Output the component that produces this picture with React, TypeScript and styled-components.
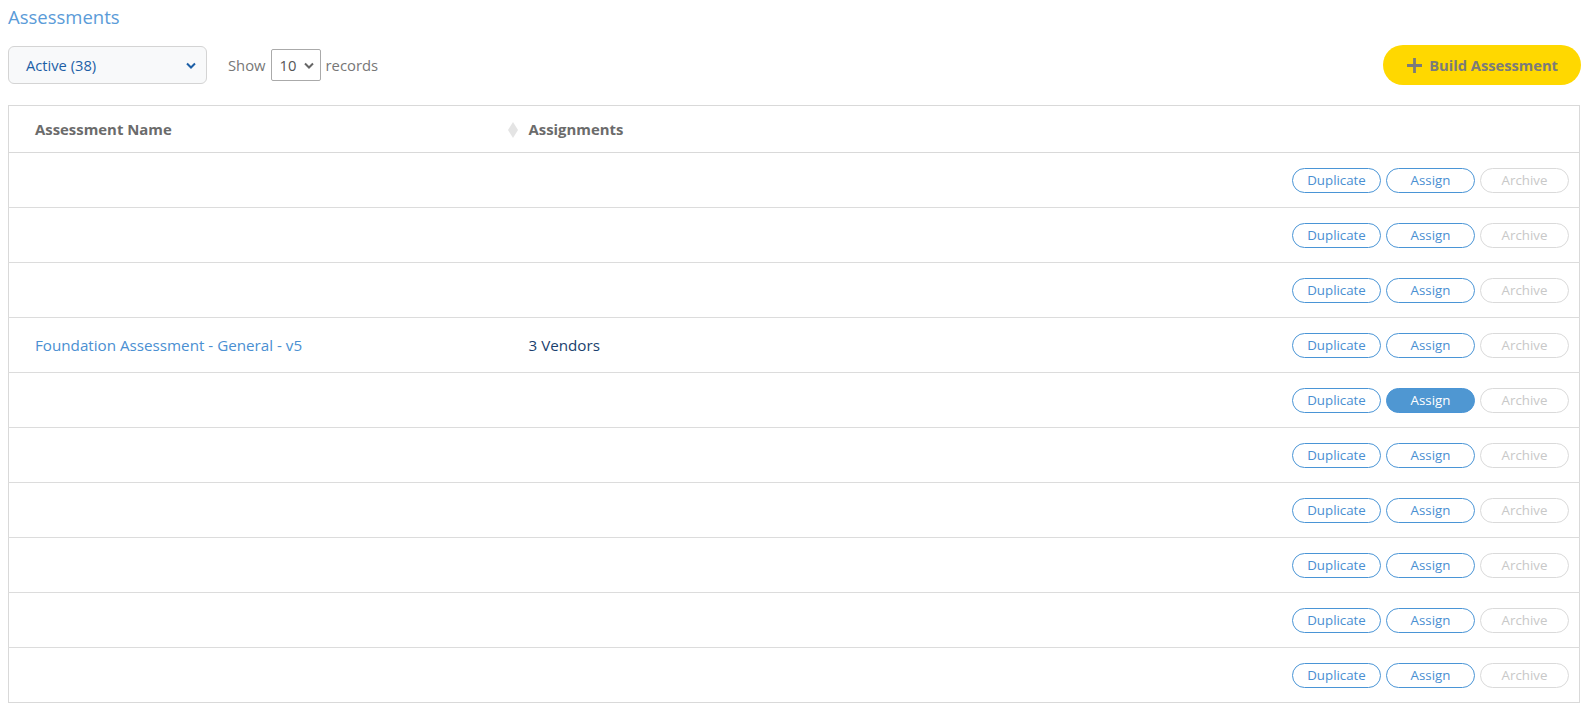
import React, { useState } from 'react'
import styled, { createGlobalStyle } from 'styled-components'

const GlobalStyle = createGlobalStyle`
  html, body {
    overflow: hidden;
  }
  body {
    margin: 0;
    background: #fff;
    font-family: 'Open Sans', 'Noto Sans', sans-serif;
    color: #333;
  }
`

const Page = styled.div`
  padding: 4px 6px 0 8px;
`

const Title = styled.h2`
  margin: 0 0 16px;
  font-size: 18.5px;
  font-weight: 400;
  line-height: 26px;
  color: #5a9bd8;
`

const Toolbar = styled.div`
  display: flex;
  align-items: center;
  height: 38px;
  margin-bottom: 21px;
`

const StatusSelect = styled.div`
  display: flex;
  align-items: center;
  justify-content: space-between;
  box-sizing: border-box;
  width: 199px;
  height: 38px;
  padding: 0 10px 0 17px;
  border: 1px solid #d4d4d4;
  border-radius: 6px;
  background: #f8f9fa;
  color: #1d5fa6;
  font-size: 14.7px;
`

const LengthLabel = styled.div`
  display: flex;
  align-items: center;
  gap: 5px;
  margin-left: 21px;
  color: #777;
  font-size: 14.8px;
`

const LengthSelect = styled.div`
  display: flex;
  align-items: center;
  justify-content: space-between;
  box-sizing: border-box;
  width: 50px;
  height: 32px;
  padding: 0 6px 0 8px;
  border: 1px solid #aaa;
  border-radius: 2px;
  color: #555;
  font-size: 14.8px;
`

const BuildButton = styled.button`
  display: flex;
  align-items: center;
  gap: 6px;
  margin-left: auto;
  margin-right: -1px;
  height: 40px;
  padding: 0 23px 0 23px;
  border: none;
  border-radius: 20px;
  background: #ffd800;
  color: #7b7b7b;
  font-family: inherit;
  font-size: 14.7px;
  font-weight: 700;
  cursor: pointer;
`

const Table = styled.table`
  width: 100%;
  border-collapse: collapse;
  border: 1px solid #d9d9d9;
  font-size: 15.2px;
`

const HeadCell = styled.th<{ $width?: number }>`
  position: relative;
  box-sizing: border-box;
  width: ${({ $width }) => ($width ? `${$width}px` : 'auto')};
  height: 47px;
  padding: 0 26px;
  text-align: left;
  font-size: 14.9px;
  font-weight: 700;
  color: #6b6b6b;
  border-bottom: 1px solid #d9d9d9;
`

const SortIcon = styled.svg`
  position: absolute;
  left: 5px;
  top: 16px;
`

const Row = styled.tr`
  height: 55px;
  border-bottom: 1px solid #dcdcdc;
  &:last-child {
    border-bottom: none;
  }
`

const Cell = styled.td`
  padding: 0 26px;
`

const NameLink = styled.a`
  color: #4a8fd2;
  text-decoration: none;
`

const Vendors = styled.span`
  color: #1a3f6e;
`

const Actions = styled.td`
  padding: 0 10px 0 0;
  text-align: right;
  white-space: nowrap;
`

const ActionGroup = styled.div`
  display: inline-flex;
  gap: 5px;
`

const PillButton = styled.button<{ $variant: 'primary' | 'active' | 'disabled' }>`
  box-sizing: border-box;
  width: 89px;
  height: 25px;
  padding: 0;
  border-radius: 13px;
  font-family: inherit;
  font-size: 13.3px;
  cursor: pointer;
  border: 1px solid
    ${({ $variant }) => ($variant === 'disabled' ? '#dadada' : '#4a95d6')};
  background: ${({ $variant }) => ($variant === 'active' ? '#4f97d2' : '#fff')};
  color: ${({ $variant }) =>
    $variant === 'active'
      ? '#fff'
      : $variant === 'disabled'
        ? '#c8c8c8'
        : '#4a8fd2'};
`

type TAssessment = {
  id: number
  name: string
  vendors: string
}

const rows: TAssessment[] = [
  { id: 1, name: '', vendors: '' },
  { id: 2, name: '', vendors: '' },
  { id: 3, name: '', vendors: '' },
  { id: 4, name: 'Foundation Assessment - General - v5', vendors: '3 Vendors' },
  { id: 5, name: '', vendors: '' },
  { id: 6, name: '', vendors: '' },
  { id: 7, name: '', vendors: '' },
  { id: 8, name: '', vendors: '' },
  { id: 9, name: '', vendors: '' },
  { id: 10, name: '', vendors: '' },
]

function Chevron({ color }: { color: string }): JSX.Element {
  return (
    <svg width="10" height="7" viewBox="0 0 10 7">
      <path d="M1 1.5 L5 5.5 L9 1.5" fill="none" stroke={color} strokeWidth="2" />
    </svg>
  )
}

function App(): JSX.Element {
  const [hovered] = useState<number>(5)

  return (
    <Page>
      <GlobalStyle />
      <Title>Assessments</Title>
      <Toolbar>
        <StatusSelect>
          <span>Active (38)</span>
          <Chevron color="#1d5fa6" />
        </StatusSelect>
        <LengthLabel>
          <span>Show</span>
          <LengthSelect>
            <span>10</span>
            <Chevron color="#666" />
          </LengthSelect>
          <span>records</span>
        </LengthLabel>
        <BuildButton type="button">
          <svg width="17" height="17" viewBox="0 0 17 17">
            <path d="M8.5 1 V16 M1 8.5 H16" stroke="#7b7b7b" strokeWidth="2.8" />
          </svg>
          Build Assessment
        </BuildButton>
      </Toolbar>
      <Table>
        <thead>
          <tr>
            <HeadCell $width={494}>Assessment Name</HeadCell>
            <HeadCell>
              <SortIcon width="10" height="16" viewBox="0 0 10 16">
                <path d="M5 0 L10 8 L5 16 L0 8 Z" fill="#e4e4e4" />
              </SortIcon>
              Assignments
            </HeadCell>
            <HeadCell />
          </tr>
        </thead>
        <tbody>
          {rows.map((row) => (
            <Row key={`row_${row.id}`}>
              <Cell>{row.name && <NameLink href="#">{row.name}</NameLink>}</Cell>
              <Cell>{row.vendors && <Vendors>{row.vendors}</Vendors>}</Cell>
              <Actions>
                <ActionGroup>
                  <PillButton type="button" $variant="primary">
                    Duplicate
                  </PillButton>
                  <PillButton
                    type="button"
                    $variant={row.id === hovered ? 'active' : 'primary'}
                  >
                    Assign
                  </PillButton>
                  <PillButton type="button" $variant="disabled">
                    Archive
                  </PillButton>
                </ActionGroup>
              </Actions>
            </Row>
          ))}
        </tbody>
      </Table>
    </Page>
  )
}

export default App
